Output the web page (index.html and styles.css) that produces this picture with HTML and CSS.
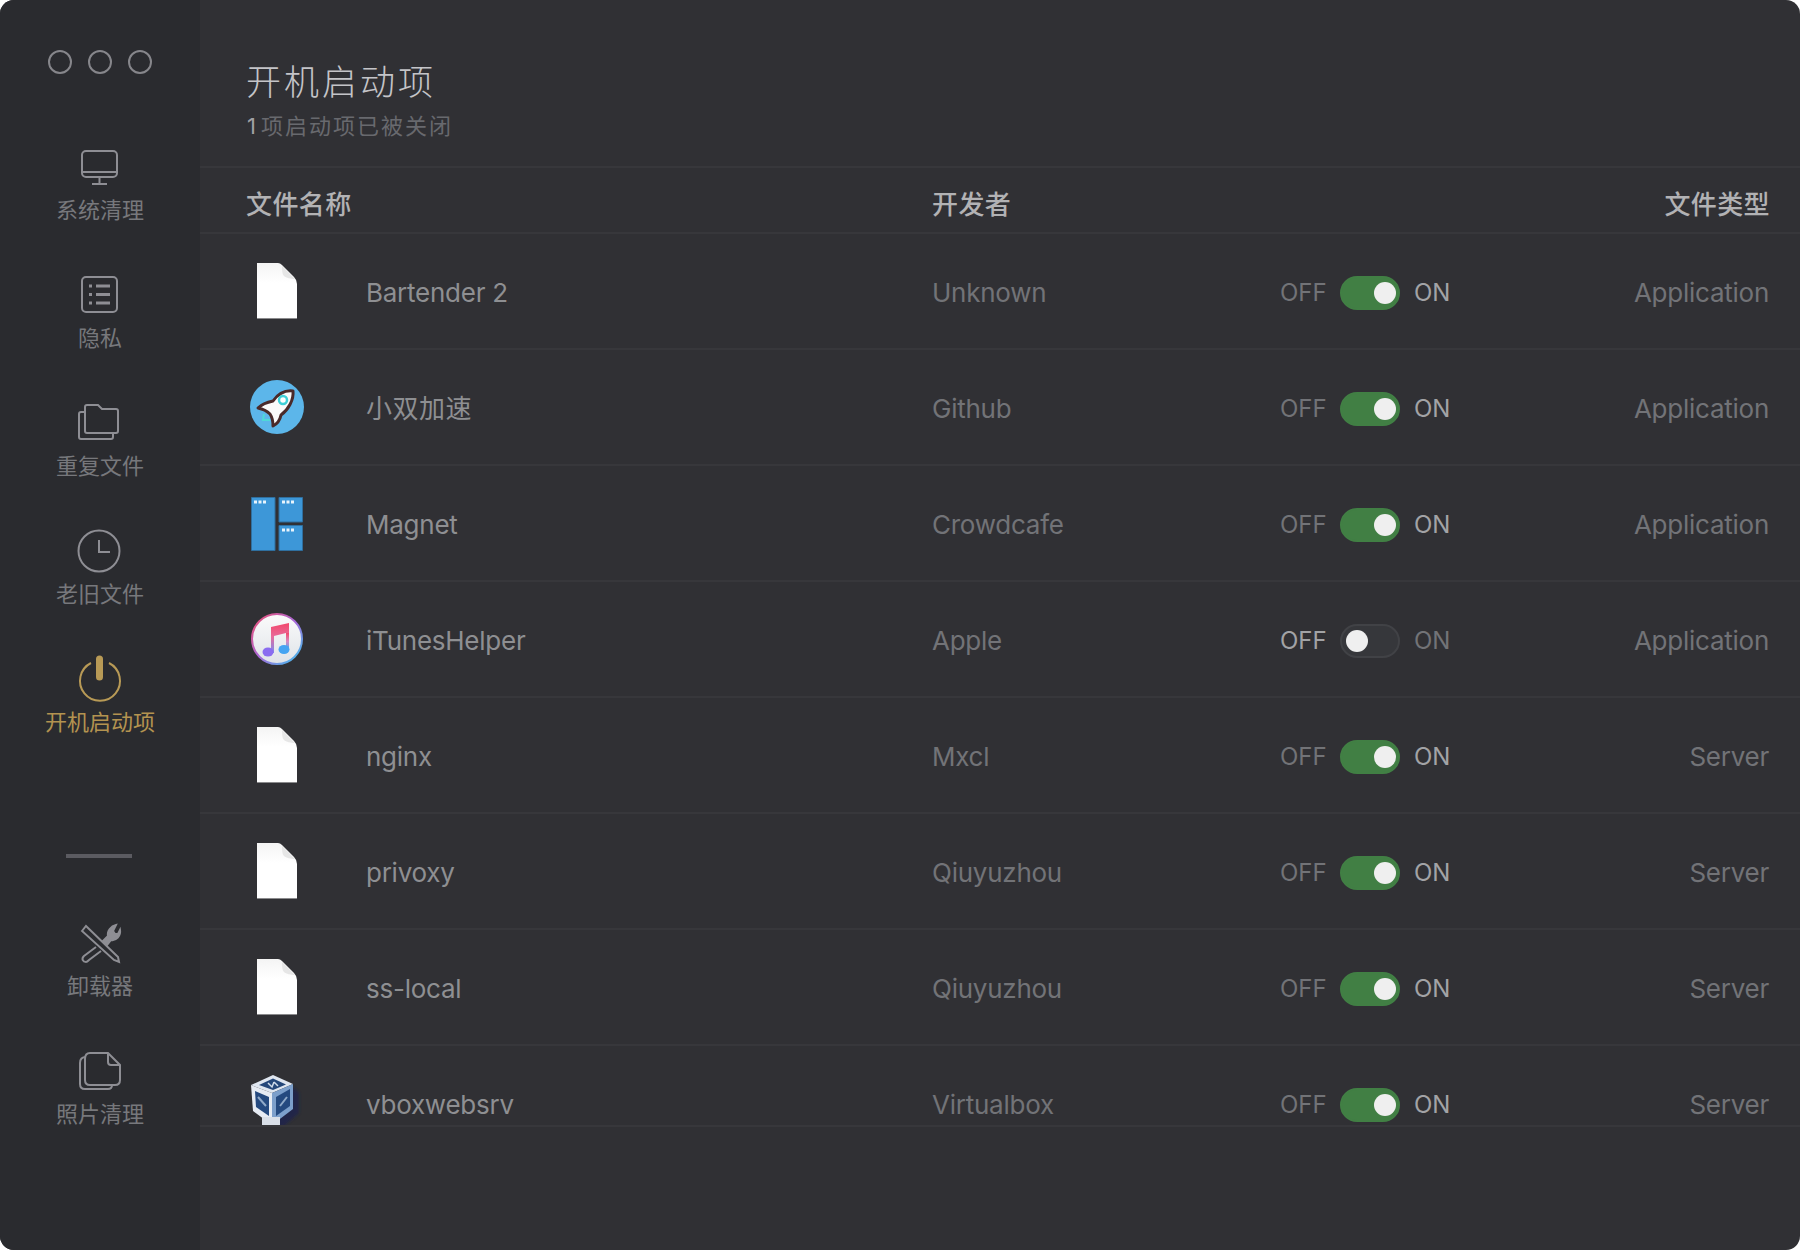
FILE: index.html
```html
<!DOCTYPE html>
<html lang="zh-CN">
<head>
    <meta charset="UTF-8">
    <meta name="viewport" content="width=device-width, initial-scale=1.0">
    <title>开机启动项</title>
    <link rel="stylesheet" href="styles.css">
</head>
<body>
    <svg class="defs" width="0" height="0">
        <defs>
            <linearGradient id="fileGrad" x1="0" y1="0" x2="0" y2="1">
                <stop offset="0" stop-color="#f4f4f4"/>
                <stop offset="0.35" stop-color="#ffffff"/>
            </linearGradient>
            <linearGradient id="noteGrad" x1="0" y1="0" x2="0" y2="1">
                <stop offset="0" stop-color="#f2476b"/>
                <stop offset="0.45" stop-color="#e86a9a"/>
                <stop offset="1" stop-color="#7a8cf0"/>
            </linearGradient>
            <linearGradient id="noteGradR" x1="0" y1="0" x2="0" y2="1">
                <stop offset="0" stop-color="#f2476b"/>
                <stop offset="0.5" stop-color="#d88ac0"/>
                <stop offset="1" stop-color="#45a4f2"/>
            </linearGradient>
            <linearGradient id="ringGrad" x1="0" y1="0" x2="1" y2="1">
                <stop offset="0" stop-color="#f0506e"/>
                <stop offset="0.5" stop-color="#a868d8"/>
                <stop offset="1" stop-color="#38c8f0"/>
            </linearGradient>
            <linearGradient id="discGrad" x1="0" y1="0" x2="0" y2="1">
                <stop offset="0" stop-color="#fbfbfb"/>
                <stop offset="1" stop-color="#dfe3e8"/>
            </linearGradient>
            <filter id="soft"><feGaussianBlur stdDeviation="1.500"/></filter>
            <symbol id="file" viewBox="0 0 60 60">
                <path d="M10 2H31Q33 2 35 4L47 16Q50 19 50 23V58H10Z" fill="url(#fileGrad)"/>
                <path d="M35 5L48 18C44 18 39 17 37 15C35 13 35 9 35 5Z" fill="#e6e6e6"/>
                <path d="M10 57H50V58H10Z" fill="#8a8a8c"/>
            </symbol>
        </defs>
    </svg>

    <div id="app">
        <aside id="side">
            <div class="lights">
                <span></span>
                <span></span>
                <span></span>
            </div>

            <a class="nav-item">
                <svg class="nav-icon" viewBox="0 0 44 40">
                    <rect x="4" y="4" width="35" height="26" rx="4"/>
                    <path d="M4 25H39M21.500 30V37M14 37H29"/>
                </svg>
                <span>系统清理</span>
            </a>
            <a class="nav-item">
                <svg class="nav-icon" viewBox="0 0 44 40">
                    <rect x="4" y="2" width="35" height="35" rx="4"/>
                    <path d="M11 11H14M18 11H32M11 19.500H14M18 19.500H32M11 28H14M18 28H32" stroke-width="3"/>
                </svg>
                <span>隐私</span>
            </a>
            <a class="nav-item">
                <svg class="nav-icon" viewBox="0 0 44 40">
                    <path d="M7 4Q7 2 9 2H20L24 6H38Q40 6 40 8V28Q40 30 38 30H9Q7 30 7 28Z"/>
                    <path d="M7 9H3Q1 9 1 11V34Q1 36 3 36H33Q35 36 35 34V30"/>
                </svg>
                <span>重复文件</span>
            </a>
            <a class="nav-item">
                <svg class="nav-icon" viewBox="0 0 44 40">
                    <circle cx="21" cy="20" r="20.500"/>
                    <path d="M21 9V21H32"/>
                </svg>
                <span>老旧文件</span>
            </a>
            <a class="nav-item active">
                <svg class="nav-icon" viewBox="0 0 44 44">
                    <path d="M13 7A20 20 0 1 0 31 7"/>
                    <path d="M21.500 3V21" stroke-width="7" stroke-linecap="round"/>
                </svg>
                <span>开机启动项</span>
            </a>

            <div class="side-line"></div>

            <a class="nav-item">
                <svg class="nav-icon" viewBox="0 0 44 40">
                    <path d="M4 8L8 3L40 34L41 39L36 37Z"/>
                    <path d="M18 24L6 33C3 36 5 39 8 39C9 39 10 38 11 37L23 28"/>
                    <path d="M25 18L30 13C29 8 33 3 38 2L35 8L37 11L40 11L42 7C43 13 38 18 33 17L29 22Z" fill="#8e8e94"/>
                </svg>
                <span>卸载器</span>
            </a>
            <a class="nav-item">
                <svg class="nav-icon" viewBox="0 0 44 40">
                    <path d="M8 6C4 6 2 8 2 12V33C2 36 3 38 7 38H30C33 38 34 36 34 34"/>
                    <path d="M7 8C7 4 9 2 12 2H30L42 14V29C42 32 40 34 37 34H12C9 34 7 32 7 29Z"/>
                    <path d="M30 2V11C30 13 31 14 33 14H42"/>
                </svg>
                <span>照片清理</span>
            </a>
        </aside>

        <main id="main">
            <header class="top">
                <h1>开机启动项</h1>
                <p><b>1</b>项启动项已被关闭</p>
            </header>

            <div class="row head">
                <span>文件名称</span>
                <span>开发者</span>
                <span></span>
                <span>文件类型</span>
            </div>

            <div class="list">
                <div class="row">
                    <svg class="app-icon"><use href="#file"/></svg>
                    <span class="name">Bartender 2</span>
                    <span>Unknown</span>
                    <div class="toggle on"><span class="off-t">OFF</span><i class="switch"></i><span class="on-t">ON</span></div>
                    <span>Application</span>
                </div>
                <div class="row">
                    <svg class="app-icon" viewBox="0 0 60 60">
                        <circle cx="30" cy="30" r="27" fill="#5cb6ea"/>
                        <path d="M17 37L16 43L23 43" fill="none" stroke="#4fd8d8" stroke-width="2"/>
                        <path d="M46 14C38 13 31 17 26 24C21 25 15 27 11 31C16 32 20 34 23 37C25 40 26 44 26 49C30 47 33 43 34 38C41 33 47 23 46 14Z" fill="#fafafa" stroke="#4a2a2a" stroke-width="3" stroke-linejoin="round"/>
                        <circle cx="36" cy="23" r="4" fill="#fff" stroke="#3fd0d8" stroke-width="2.500"/>
                    </svg>
                    <span class="name cn">小双加速</span>
                    <span>Github</span>
                    <div class="toggle on"><span class="off-t">OFF</span><i class="switch"></i><span class="on-t">ON</span></div>
                    <span>Application</span>
                </div>
                <div class="row">
                    <svg class="app-icon" viewBox="0 0 60 60">
                        <path d="M4.500 4.500H28V57.500H4.500ZM32 4.500H55.500V29H32ZM32 32.500H55.500V57.500H32Z" fill="#3d97d8" stroke="#2f6f9f"/>
                        <path d="M7 7.500h3v3h-3zM11.500 7.500h3v3h-3zM16 7.500h3v3h-3zM35 7.500h3v3h-3zM39.500 7.500h3v3h-3zM44 7.500h3v3h-3zM35 35.500h3v3h-3zM39.500 35.500h3v3h-3zM44 35.500h3v3h-3z" fill="#e8f4fc"/>
                    </svg>
                    <span class="name">Magnet</span>
                    <span>Crowdcafe</span>
                    <div class="toggle on"><span class="off-t">OFF</span><i class="switch"></i><span class="on-t">ON</span></div>
                    <span>Application</span>
                </div>
                <div class="row">
                    <svg class="app-icon" viewBox="0 0 60 60">
                        <circle cx="30" cy="30" r="25" fill="url(#discGrad)" stroke="url(#ringGrad)" stroke-width="2"/>
                        <path d="M24 18L42 14V41H39V24L27 27V44H24Z" fill="url(#noteGrad)"/>
                        <path d="M39 24H42V41H39Z" fill="url(#noteGradR)"/>
                        <ellipse cx="21" cy="43" rx="5.500" ry="4.500" fill="#8a6cf0"/>
                        <ellipse cx="37" cy="40.500" rx="5.500" ry="4.500" fill="#45a4f2"/>
                    </svg>
                    <span class="name">iTunesHelper</span>
                    <span>Apple</span>
                    <div class="toggle"><span class="off-t">OFF</span><i class="switch"></i><span class="on-t">ON</span></div>
                    <span>Application</span>
                </div>
                <div class="row">
                    <svg class="app-icon"><use href="#file"/></svg>
                    <span class="name">nginx</span>
                    <span>Mxcl</span>
                    <div class="toggle on"><span class="off-t">OFF</span><i class="switch"></i><span class="on-t">ON</span></div>
                    <span>Server</span>
                </div>
                <div class="row">
                    <svg class="app-icon"><use href="#file"/></svg>
                    <span class="name">privoxy</span>
                    <span>Qiuyuzhou</span>
                    <div class="toggle on"><span class="off-t">OFF</span><i class="switch"></i><span class="on-t">ON</span></div>
                    <span>Server</span>
                </div>
                <div class="row">
                    <svg class="app-icon"><use href="#file"/></svg>
                    <span class="name">ss-local</span>
                    <span>Qiuyuzhou</span>
                    <div class="toggle on"><span class="off-t">OFF</span><i class="switch"></i><span class="on-t">ON</span></div>
                    <span>Server</span>
                </div>
                <div class="row">
                    <svg class="app-icon" viewBox="0 0 60 60">
                        <path d="M46 14L52 20V40L36 54H25Z" fill="#1c2350" opacity="0.75" filter="url(#soft)"/>
                        <path d="M26 2L46 11L25 20L4 12Z" fill="#dfe6f0"/>
                        <path d="M4 12L25 20V52L6 38Z" fill="#e6ebf3"/>
                        <path d="M46 11L25 20V52L46 36Z" fill="#7c9fcb"/>
                        <path d="M15 44H33V60H15Z" fill="#d9dfe8"/>
                        <path d="M26 5.500L39 11.500L26 17L12 12Z" fill="#24477a"/>
                        <path d="M8 18L22 24V43L9 34Z" fill="#24497f"/>
                        <path d="M43 16L29 24V43L43 33Z" fill="#24497f"/>
                        <path d="M21 10L25 14L27 9M27 9L31 13" fill="none" stroke="#cfdbea" stroke-width="1.500"/>
                        <path d="M11 24L19 33M33 33L40 24" stroke="#8fa9c8" stroke-width="2"/>
                    </svg>
                    <span class="name">vboxwebsrv</span>
                    <span>Virtualbox</span>
                    <div class="toggle on"><span class="off-t">OFF</span><i class="switch"></i><span class="on-t">ON</span></div>
                    <span>Server</span>
                </div>
            </div>
        </main>
    </div>
</body>
</html>
```

FILE: styles.css
```css
* {
    margin: 0;
    padding: 0;
    box-sizing: border-box;
}

body {
    background: #ffffff;
    font-family: Inter, "Noto Sans CJK SC", sans-serif;
}

.defs {
    display: block;
    height: 0;
}

#app {
    display: flex;
    width: 1800px;
    height: 1250px;
    border-radius: 14px;
    overflow: hidden;
    background: #303034;
}

/* 左侧栏 */
#side {
    display: flex;
    flex-direction: column;
    align-items: center;
    width: 200px;
    flex-shrink: 0;
    padding-top: 50px;
    background: #2a2b2f;
}

.lights {
    display: flex;
    gap: 16px;
    height: 97px;
}

.lights span {
    width: 24px;
    height: 24px;
    border: 2px solid #86868b;
    border-radius: 50%;
}

.nav-item {
    display: flex;
    flex-direction: column;
    align-items: center;
    height: 128px;
    color: #77787c;
    font-size: 22px;
    line-height: 30px;
}

.nav-item span {
    margin-top: 8px;
}

.nav-item.active {
    color: #b39350;
}

.nav-icon {
    width: 44px;
    height: 40px;
    overflow: visible;
    fill: none;
    stroke: #8e8e94;
    stroke-width: 2;
}

.active .nav-icon {
    height: 44px;
    margin: -3px 0 -1px;
    stroke: #b89a56;
}

.side-line {
    width: 66px;
    height: 4px;
    margin: 67px 2px 65px 0;
    background: #5b5b61;
}

/* 右侧 */
#main {
    flex: 1;
    min-width: 0;
}

.top {
    height: 168px;
    padding: 59px 0 0 46px;
    border-bottom: 2px solid #37373b;
}

.top h1 {
    color: #c4c4c8;
    font-size: 35px;
    font-weight: 300;
    line-height: 46px;
    letter-spacing: 3px;
}

.top p {
    margin-top: 7px;
    padding-left: 1px;
    color: #68696e;
    font-size: 22px;
    line-height: 28px;
    letter-spacing: 2px;
}

.top p b {
    margin-right: 5px;
    color: #a0a0a4;
    font-weight: 400;
    letter-spacing: 0;
}

.row {
    display: grid;
    grid-template-columns: 119px 566px 348px 1fr auto;
    align-items: center;
    height: 116px;
    padding: 0 31px 0 47px;
    border-bottom: 2px solid #37373b;
    color: #727377;
    font-size: 26px;
    line-height: 30px;
    letter-spacing: -0.25px;
}

.row > span,
.toggle {
    padding-top: 4px;
}

.row.head {
    grid-template-columns: 686px 348px 1fr auto;
    height: 66px;
    padding: 9px 30px 0 46px;
    color: #b2b2b4;
    font-weight: 500;
    letter-spacing: 0.4px;
}

.head > span {
    padding-top: 0;
}

.list {
    height: 893px;
    overflow: hidden;
    border-bottom: 2px solid #37373b;
}

.app-icon {
    display: block;
    width: 60px;
    height: 60px;
}

.name {
    color: #8e8f92;
}

.name.cn {
    letter-spacing: 0.5px;
}

.toggle {
    display: flex;
    align-items: center;
    font-size: 24px;
    letter-spacing: 0;
}

.off-t {
    width: 60px;
    color: #a2a3a6;
}

.on-t {
    margin-left: 14px;
}

.toggle.on .off-t {
    color: #727377;
}

.toggle.on .on-t {
    color: #a2a3a6;
}

.switch {
    position: relative;
    display: block;
    width: 60px;
    height: 34px;
    border: 2px solid #414246;
    border-radius: 17px;
    background: #36373b;
}

.switch::after {
    content: "";
    position: absolute;
    left: 4px;
    top: 4px;
    width: 22px;
    height: 22px;
    border-radius: 50%;
    background: #efefef;
}

.on .switch {
    border-color: #417f44;
    background: #417f44;
}

.on .switch::after {
    left: 32px;
}
```
